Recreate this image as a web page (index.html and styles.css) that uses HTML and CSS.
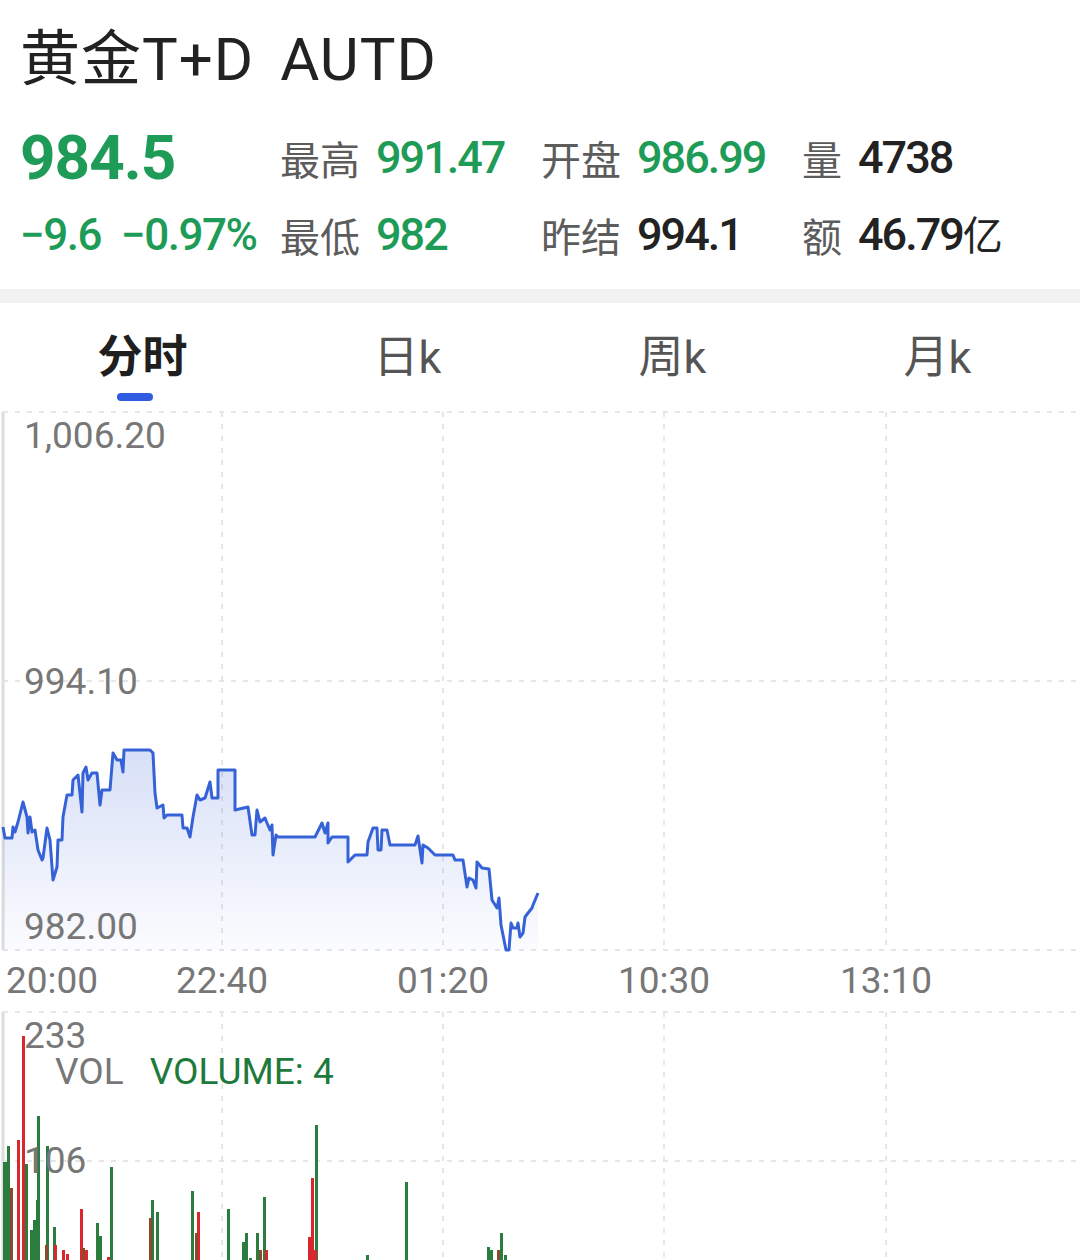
FILE: index.html
```html
<!DOCTYPE html>
<html lang="zh-CN">
<head>
<meta charset="utf-8">
<title>黄金T+D AUTD</title>
<link rel="stylesheet" href="styles.css">
</head>
<body>
<div class="page">
  <header class="quote">
    <h1 class="title">黄金T+D<span class="code">AUTD</span></h1>
    <div class="stats">
      <div class="price up">984.5</div>
      <div class="stat"><span class="lbl">最高</span><span class="val green">991.47</span></div>
      <div class="stat"><span class="lbl">开盘</span><span class="val green">986.99</span></div>
      <div class="stat"><span class="lbl">量</span><span class="val">4738</span></div>
      <div class="change green"><span>−9.6</span><span>−0.97%</span></div>
      <div class="stat"><span class="lbl">最低</span><span class="val green">982</span></div>
      <div class="stat"><span class="lbl">昨结</span><span class="val">994.1</span></div>
      <div class="stat"><span class="lbl">额</span><span class="val">46.79<span class="unit">亿</span></span></div>
    </div>
  </header>
  <div class="band"></div>
  <nav class="tabs">
    <div class="tab active"><span class="tab-text">分时</span><span class="indicator"></span></div>
    <div class="tab"><span class="tab-text">日k</span></div>
    <div class="tab"><span class="tab-text">周k</span></div>
    <div class="tab"><span class="tab-text">月k</span></div>
  </nav>

  <section class="price-chart">
    <svg class="chart-svg" width="1080" height="542" viewBox="0 410 1080 542">
      <defs>
        <linearGradient id="fillGrad" x1="0" y1="0" x2="0" y2="1">
          <stop offset="0" stop-color="#3a63d8" stop-opacity="0.2"/>
          <stop offset="1" stop-color="#3a63d8" stop-opacity="0.02"/>
        </linearGradient>
      </defs>
      <g class="grid">
        <line x1="3" y1="412" x2="1080" y2="412"/>
        <line x1="3" y1="681" x2="1080" y2="681"/>
        <line x1="3" y1="950" x2="1080" y2="950"/>
        <line x1="222" y1="412" x2="222" y2="950"/>
        <line x1="443" y1="412" x2="443" y2="950"/>
        <line x1="664" y1="412" x2="664" y2="950"/>
        <line x1="886" y1="412" x2="886" y2="950"/>
      </g>
      <line class="axis" x1="3" y1="412" x2="3" y2="950"/>
      <polygon class="area" points="3,950 3,827 5,838 12,838 13,827 15,832 18,822 23,802 27,817 28,833 30,817 32,832 35,830 38,850 42,860 43,858 47,828 50,840 53,880 57,867 58,840 62,840 63,817 67,795 72,795 73,780 78,775 82,812 83,773 86,767 88,780 92,773 97,773 100,805 102,790 110,790 113,753 117,760 121,760 123,772 124,750 150,750 153,753 155,793 157,808 163,805 164,818 167,815 182,815 183,828 187,828 190,837 193,817 197,795 200,800 205,798 210,782 212,798 218,798 218,770 235,770 235,810 248,807 252,835 255,835 257,810 260,822 265,818 267,823 270,830 272,825 273,855 276,835 278,837 315,837 322,823 325,833 328,823 328,843 332,837 348,837 348,862 355,855 367,855 368,842 373,828 377,828 378,850 381,850 382,830 387,830 390,845 415,845 418,836 422,863 423,845 428,848 432,852 435,855 453,855 455,860 463,860 467,887 469,878 473,880 476,888 477,862 482,868 489,869 492,900 497,908 499,898 501,925 506,950 509,950 511,923 513,928 517,928 518,923 520,937 523,933 525,917 528,913 532,908 533,905 538,893 538,950"/>
      <polyline class="line" points="3,827 5,838 12,838 13,827 15,832 18,822 23,802 27,817 28,833 30,817 32,832 35,830 38,850 42,860 43,858 47,828 50,840 53,880 57,867 58,840 62,840 63,817 67,795 72,795 73,780 78,775 82,812 83,773 86,767 88,780 92,773 97,773 100,805 102,790 110,790 113,753 117,760 121,760 123,772 124,750 150,750 153,753 155,793 157,808 163,805 164,818 167,815 182,815 183,828 187,828 190,837 193,817 197,795 200,800 205,798 210,782 212,798 218,798 218,770 235,770 235,810 248,807 252,835 255,835 257,810 260,822 265,818 267,823 270,830 272,825 273,855 276,835 278,837 315,837 322,823 325,833 328,823 328,843 332,837 348,837 348,862 355,855 367,855 368,842 373,828 377,828 378,850 381,850 382,830 387,830 390,845 415,845 418,836 422,863 423,845 428,848 432,852 435,855 453,855 455,860 463,860 467,887 469,878 473,880 476,888 477,862 482,868 489,869 492,900 497,908 499,898 501,925 506,950 509,950 511,923 513,928 517,928 518,923 520,937 523,933 525,917 528,913 532,908 533,905 538,893"/>
    </svg>
    <span class="ylabel y-top">1,006.20</span>
    <span class="ylabel y-mid">994.10</span>
    <span class="ylabel y-bot">982.00</span>
  </section>

  <div class="xaxis">
    <span class="xl first">20:00</span>
    <span class="xl">22:40</span>
    <span class="xl">01:20</span>
    <span class="xl">10:30</span>
    <span class="xl">13:10</span>
  </div>

  <section class="vol-chart">
    <svg class="chart-svg" width="1080" height="250" viewBox="0 1010 1080 250">
      <g class="grid">
        <line x1="3" y1="1012" x2="1080" y2="1012"/>
        <line x1="3" y1="1161" x2="1080" y2="1161"/>
        <line x1="222" y1="1012" x2="222" y2="1260"/>
        <line x1="443" y1="1012" x2="443" y2="1260"/>
        <line x1="664" y1="1012" x2="664" y2="1260"/>
        <line x1="886" y1="1012" x2="886" y2="1260"/>
      </g>
      <line class="axis" x1="3" y1="1012" x2="3" y2="1260"/>
      <g class="bars-g">
        <rect x="3" y="1162" width="5" height="98"/>
        <rect x="7" y="1146" width="3" height="114"/>
        <rect x="25" y="1164" width="3" height="96"/>
        <rect x="30" y="1230" width="3" height="30"/>
        <rect x="33" y="1220" width="3" height="40"/>
        <rect x="36" y="1200" width="2" height="60"/>
        <rect x="37" y="1116" width="3" height="144"/>
        <rect x="46" y="1146" width="3" height="114"/>
        <rect x="53" y="1227" width="3" height="33"/>
        <rect x="96" y="1223" width="3" height="37"/>
        <rect x="99" y="1236" width="3" height="24"/>
        <rect x="110" y="1167" width="3" height="93"/>
        <rect x="151" y="1200" width="3" height="60"/>
        <rect x="156" y="1212" width="3" height="48"/>
        <rect x="191" y="1191" width="3" height="69"/>
        <rect x="227" y="1209" width="3" height="51"/>
        <rect x="242" y="1242" width="3" height="18"/>
        <rect x="245" y="1233" width="3" height="27"/>
        <rect x="249" y="1258" width="3" height="2"/>
        <rect x="256" y="1233" width="3" height="27"/>
        <rect x="263" y="1197" width="3" height="63"/>
        <rect x="315" y="1125" width="3" height="135"/>
        <rect x="366" y="1255" width="3" height="5"/>
        <rect x="405" y="1182" width="3" height="78"/>
        <rect x="487" y="1247" width="3" height="13"/>
        <rect x="490" y="1250" width="3" height="10"/>
        <rect x="500" y="1233" width="3" height="27"/>
        <rect x="504" y="1255" width="3" height="5"/>
      </g>
      <g class="bars-r">
        <rect x="17" y="1140" width="3" height="120"/>
        <rect x="22" y="1036" width="3" height="224"/>
        <rect x="54" y="1245" width="3" height="15"/>
        <rect x="62" y="1250" width="3" height="10"/>
        <rect x="66" y="1254" width="3" height="6"/>
        <rect x="80" y="1209" width="3" height="51"/>
        <rect x="85" y="1250" width="3" height="10"/>
        <rect x="107" y="1257" width="3" height="3"/>
        <rect x="197" y="1212" width="3" height="48"/>
        <rect x="265" y="1250" width="3" height="10"/>
        <rect x="308" y="1237" width="3" height="23"/>
        <rect x="311" y="1178" width="3" height="82"/>
        <rect x="314" y="1250" width="3" height="10"/>
      </g>
      <g class="bars-b">
        <rect x="10" y="1188" width="3" height="72"/>
        <rect x="45" y="1245" width="3" height="15"/>
        <rect x="82" y="1248" width="3" height="12"/>
        <rect x="149" y="1218" width="3" height="42"/>
        <rect x="195" y="1233" width="3" height="27"/>
        <rect x="259" y="1250" width="3" height="10"/>
        <rect x="497" y="1250" width="3" height="10"/>
      </g>
    </svg>
    <span class="ylabel v-top">233</span>
    <div class="vol-legend"><span class="vol-name">VOL</span><span class="vol-val">VOLUME: 4</span></div>
    <span class="ylabel v-mid">106</span>
  </section>
</div>
</body>
</html>
```

FILE: styles.css
```css
* { box-sizing: border-box; }

html, body {
  margin: 0;
  padding: 0;
  background: #ffffff;
}

body {
  width: 1080px;
  height: 1260px;
  overflow: hidden;
  font-family: "Roboto", "Noto Sans CJK SC", sans-serif;
  color: #222222;
}

.page {
  width: 1080px;
}

/* ---------- quote header ---------- */
.quote {
  height: 289px;
  padding: 25px 0 0 20px;
}

.title {
  margin: 0;
  font-family: "Roboto", "Noto Sans CJK SC", sans-serif;
  font-weight: 400;
  font-size: 60px;
  line-height: 70px;
  color: #222222;
  letter-spacing: 1px;
}

.code {
  margin-left: 26px;
}

.stats {
  display: grid;
  grid-template-columns: 260px 261px 261px 1fr;
  grid-auto-rows: 77px;
  align-items: center;
  margin-top: 24px;
}

.price {
  font-size: 62px;
  font-weight: 700;
  letter-spacing: -1px;
  line-height: 1;
}

.up, .green {
  color: #1e9b57;
}

.stat {
  display: flex;
  align-items: center;
  gap: 16px;
}

.lbl {
  font-family: "Noto Sans CJK SC", sans-serif;
  font-size: 40px;
  color: #5c5c5c;
  line-height: 1;
}

.val {
  font-size: 45px;
  font-weight: 500;
  letter-spacing: -2px;
  line-height: 1;
}

.unit {
  font-family: "Noto Sans CJK SC", sans-serif;
  font-weight: 400;
  font-size: 40px;
  letter-spacing: 0;
}

.change {
  display: flex;
  gap: 20px;
  font-size: 44px;
  font-weight: 500;
  letter-spacing: -1.5px;
  line-height: 1;
}

/* ---------- separator ---------- */
.band {
  height: 14px;
  background: #f2f2f2;
}

/* ---------- tabs ---------- */
.tabs {
  display: grid;
  grid-template-columns: repeat(4, 1fr);
  padding: 28px 10px 0 10px;
  height: 107px;
}

.tab {
  display: flex;
  flex-direction: column;
  align-items: center;
}

.tab-text {
  font-family: "Roboto", "Noto Sans CJK SC", sans-serif;
  font-size: 45px;
  line-height: 54px;
  color: #555555;
}

.tab.active .tab-text {
  color: #1f1f1f;
  font-weight: 700;
}

.indicator {
  margin-top: 8px;
  width: 36px;
  height: 8px;
  border-radius: 4px;
  background: #2f5ce0;
  margin-left: -16px;
}

/* ---------- charts ---------- */
.price-chart,
.vol-chart {
  position: relative;
}

.chart-svg {
  display: block;
}

.grid line {
  stroke: #dedede;
  stroke-width: 1.5;
  stroke-dasharray: 5 7;
}

.axis {
  stroke: #dddddd;
  stroke-width: 3;
}

.area {
  fill: url(#fillGrad);
  stroke: none;
}

.line {
  fill: none;
  stroke: #3562d6;
  stroke-width: 3;
  stroke-linejoin: round;
}

.ylabel {
  position: absolute;
  left: 24px;
  font-size: 37px;
  line-height: 36px;
  color: #777777;
}

.y-top { top: 8px; }
.y-mid { top: 254px; }
.y-bot { top: 499px; }

.v-top { top: 8px; }
.v-mid { top: 133px; }

.vol-legend {
  position: absolute;
  left: 55px;
  top: 44px;
  display: flex;
  gap: 26px;
  font-size: 37px;
  line-height: 36px;
}

.vol-name { color: #777777; }
.vol-val { color: #1d7a3c; }

/* ---------- x axis ---------- */
.xaxis {
  display: grid;
  grid-template-columns: 111px 222px 220px 222px 222px;
  height: 58px;
  align-items: center;
  font-size: 37px;
  color: #777777;
}

.xl {
  text-align: center;
  line-height: 58px;
}

.xl.first {
  text-align: left;
  padding-left: 6px;
}

.bars-g rect { fill: #2b7d3f; }
.bars-r rect { fill: #d9272d; }
.bars-b rect { fill: #8a4a2e; }
```
